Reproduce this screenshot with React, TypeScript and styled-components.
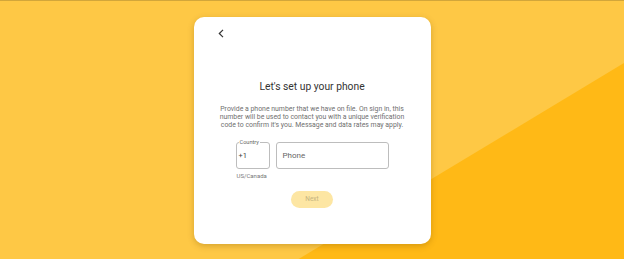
import React from "react";
import styled, { createGlobalStyle } from "styled-components";

const Global = createGlobalStyle`
  html, body { margin: 0; padding: 0; }
  body { font-family: Roboto, "Noto Sans", Arial, sans-serif; }
  #root { width: 624px; height: 259px; }
`;

const Page = styled.div`
  position: relative;
  width: 624px;
  height: 259px;
  box-sizing: border-box;
  border-top: 1px solid #d2a63a;
  background: #fec845;
  display: flex;
  align-items: center;
  justify-content: center;
  overflow: hidden;
  &::before {
    content: "";
    position: absolute;
    inset: 0;
    background: #ffb916;
    clip-path: polygon(297px 259px, 624px 62px, 624px 259px);
  }
`;

const Card = styled.div`
  position: relative;
  z-index: 1;
  width: 237px;
  height: 227px;
  box-sizing: border-box;
  background: #fff;
  border-radius: 10px;
  box-shadow: 0 2px 6px rgba(120, 80, 0, 0.3);
  padding: 12px 22px 0;
  display: flex;
  flex-direction: column;
  align-items: center;
`;

const Back = styled.button`
  align-self: flex-start;
  border: 0;
  background: none;
  padding: 0;
  width: 10px;
  height: 10px;
  display: flex;
  align-items: center;
  justify-content: center;
  color: #333;
`;

const Title = styled.h1`
  margin: 41px 0 0;
  font-size: 10.3px;
  font-weight: 400;
  color: #333;
  line-height: 13px;
  text-align: center;
`;

const Text = styled.p`
  margin: 12px 0 0;
  font-size: 6.9px;
  line-height: 8px;
  color: #707070;
  text-align: center;
  width: 190px;
`;

const Row = styled.div`
  margin-top: 13px;
  display: flex;
  gap: 6px;
  align-items: flex-start;
`;

const CountryCol = styled.div`
  display: flex;
  flex-direction: column;
`;

const Country = styled.div`
  position: relative;
  box-sizing: border-box;
  width: 34px;
  height: 27px;
  border: 1px solid #bdbdbd;
  border-radius: 3px;
  padding-left: 2px;
  display: flex;
  align-items: center;
  font-size: 7.5px;
  color: #444;
`;

const Legend = styled.span`
  position: absolute;
  top: -4px;
  left: 2px;
  background: #fff;
  font-size: 5.6px;
  color: #666;
  padding: 0 1px;
  line-height: 6px;
`;

const Hint = styled.span`
  font-size: 6px;
  color: #777;
  margin-top: 3px;
  margin-left: 1px;
`;

const Phone = styled.div`
  box-sizing: border-box;
  width: 113px;
  height: 27px;
  border: 1px solid #bdbdbd;
  border-radius: 3px;
  padding-left: 6px;
  display: flex;
  align-items: center;
  font-size: 8px;
  color: #666;
`;

const Next = styled.button`
  margin-top: 12px;
  width: 42px;
  height: 17px;
  border: 0;
  border-radius: 9px;
  background: #fde6a3;
  color: #c5b481;
  font-family: Roboto, sans-serif;
  font-size: 6.5px;
  padding: 0;
`;

export default function App() {
  return (
    <>
      <Global />
      <Page>
        <Card>
          <Back aria-label="Back">
            <svg width="6" height="9" viewBox="0 0 6 9">
              <path d="M5 0.8 L1.3 4.5 L5 8.2" fill="none" stroke="#333" strokeWidth="1.2" />
            </svg>
          </Back>
          <Title>Let's set up your phone</Title>
          <Text>
            Provide a phone number that we have on file. On sign in, this number will be used to contact you
            with a unique verification code to confirm it's you. Message and data rates may apply.
          </Text>
          <Row>
            <CountryCol>
              <Country>
                <Legend>Country</Legend>
                <span>+1</span>
              </Country>
              <Hint>US/Canada</Hint>
            </CountryCol>
            <Phone>Phone</Phone>
          </Row>
          <Next>Next</Next>
        </Card>
      </Page>
    </>
  );
}
